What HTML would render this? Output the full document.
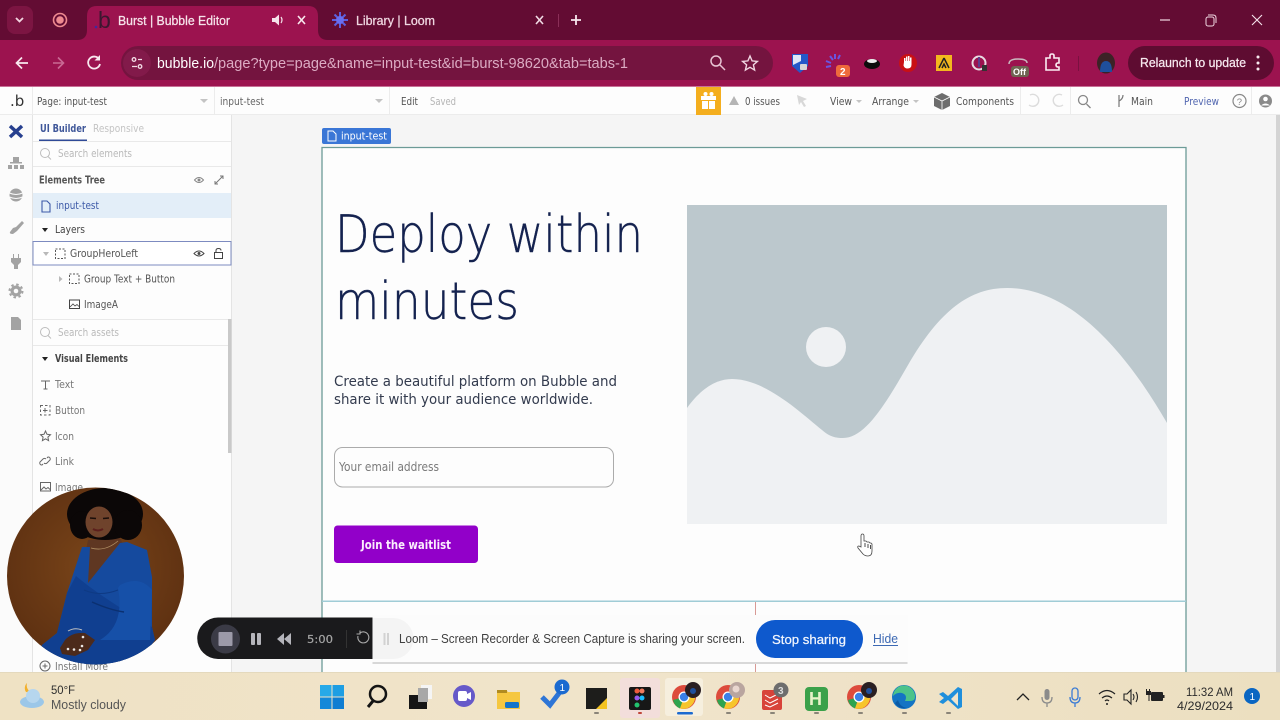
<!DOCTYPE html>
<html><head><meta charset="utf-8"><title>Burst | Bubble Editor</title>
<style>
html,body{margin:0;padding:0;width:1280px;height:720px;overflow:hidden;background:#f6f6f6}
svg{display:block;position:absolute;left:0;top:0}
text{white-space:pre}
.s{font-family:"Liberation Sans",sans-serif}
.o{font-family:"DejaVu Sans",sans-serif}
</style></head><body>
<svg width="1280" height="720" viewBox="0 0 1280 720" xmlns="http://www.w3.org/2000/svg">
<defs>
<clipPath id="cam"><circle cx="95.5" cy="576" r="88.5"/></clipPath>
<linearGradient id="tb" x1="0" x2="1" y1="0" y2="0"><stop offset="0" stop-color="#efe2c4"/><stop offset=".5" stop-color="#f0e4cb"/><stop offset="1" stop-color="#ecdfc0"/></linearGradient>
<radialGradient id="br" cx=".5" cy=".45" r=".6"><stop offset="0" stop-color="#7a4519"/><stop offset="1" stop-color="#5c2f11"/></radialGradient>
</defs>

<!-- Browser chrome -->
<rect width="1280" height="40" fill="#630c33"/>
<rect x="7" y="6" width="26" height="28" rx="8" fill="#7c1542"/>
<path d="M16 18l3.500 3.500L23 18" fill="none" stroke="#f2d5e0" stroke-width="1.800"/>
<circle cx="60" cy="20" r="6.500" fill="none" stroke="#ee8a90" stroke-width="1.600"/><circle cx="60" cy="20" r="3.800" fill="#ee8a90"/>
<path d="M77 40q10 0 10-10V16q0-10 10-10h211q10 0 10 10v14q0 10 10 10z" fill="#9c134f"/>
<circle cx="96" cy="27" r="1.300" fill="#3a2aa0"/>
<text class="s" x="98" y="28" font-size="23" fill="#3b1730">b</text>
<text class="s" x="118" y="25" font-size="12.500" fill="#f6e3ea" stroke="#f6e3ea" stroke-width=".25" textLength="112" lengthAdjust="spacingAndGlyphs">Burst | Bubble Editor</text>
<path d="M272 18h3l4-3.500v11L275 22h-3z" fill="#f5e3ea"/><path d="M281 17q2 3 0 6" fill="none" stroke="#f5e3ea" stroke-width="1.200"/>
<path d="M298 16l7 8M305 16l-7 8" stroke="#f8e8ee" stroke-width="1.600"/>
<g stroke="#5b5fe0" stroke-width="2"><path d="M340 12v16M332 20h16M334.500 14.500l11 11M345.500 14.500l-11 11"/></g><circle cx="340" cy="20" r="4" fill="#6a6ef0"/>
<text class="s" x="356" y="25" font-size="12.500" fill="#f0d8e2" stroke="#f0d8e2" stroke-width=".25" textLength="79" lengthAdjust="spacingAndGlyphs">Library | Loom</text>
<path d="M536 16l7 8M543 16l-7 8" stroke="#f0dbe4" stroke-width="1.600"/>
<rect x="558" y="14" width="1" height="13" fill="#8b2f58"/>
<path d="M576 15v10M571 20h10" stroke="#f8e8ee" stroke-width="1.800"/>
<path d="M1160 20h10" stroke="#f0d8e2" stroke-width="1.200"/>
<rect x="1206" y="17" width="8" height="9" rx="2" fill="none" stroke="#f0d8e2" stroke-width="1"/><path d="M1208 15h5q3 0 3 3v5" fill="none" stroke="#f0d8e2"/>
<path d="M1252 15l10 10M1262 15l-10 10" stroke="#f6e4ec" stroke-width="1.100"/>

<rect y="40" width="1280" height="47" fill="#9c134f"/>
<rect x="0" y="86" width="1280" height="1" fill="#c77096"/>
<path d="M28 63H17M22 57.500L16.500 63l5.500 5.500" fill="none" stroke="#f8e8ee" stroke-width="1.700"/>
<path d="M64 63H53M58 57.500l5.500 5.500-5.500 5.500" fill="none" stroke="#c96a94" stroke-width="1.600"/>
<path d="M99 59a6 6 0 1 0 1 5" fill="none" stroke="#f8e8ee" stroke-width="1.800"/><path d="M100 55v5.500h-5.500z" fill="#f8e8ee"/>
<rect x="121" y="46" width="652" height="34" rx="17" fill="#74143f"/>
<circle cx="137" cy="63" r="14" fill="#821a4a"/>
<g fill="none" stroke="#f3dbe5" stroke-width="1.300"><circle cx="134" cy="59.500" r="1.800"/><path d="M138 59.500h4M132 66.500h5"/><circle cx="140" cy="66.500" r="1.800"/></g>
<text class="s" x="157" y="68" font-size="14.500" fill="#fff" textLength="57" lengthAdjust="spacingAndGlyphs">bubble.io</text>
<text class="s" x="214" y="68" font-size="14.500" fill="#dcabc3" textLength="414" lengthAdjust="spacingAndGlyphs">/page?type=page&amp;name=input-test&amp;id=burst-98620&amp;tab=tabs-1</text>
<circle cx="716" cy="61" r="5" fill="none" stroke="#e7c3d3" stroke-width="1.500"/><path d="M720 65l5 5" stroke="#e7c3d3" stroke-width="1.500"/>
<path d="M750 56l2.100 4.900 5.300.5-4 3.500 1.200 5.200-4.600-2.800-4.600 2.800 1.200-5.200-4-3.500 5.300-.5z" fill="none" stroke="#f1d6e2" stroke-width="1.400"/>
<path d="M792 54h16v12l-8 7-8-7z" fill="#2458c9"/><path d="M793 55h8v6l-8 4z" fill="#dfe7f7"/><rect x="800" y="64" width="7" height="6" rx="1" fill="#d7d7d7"/>
<g stroke="#6a55e0" stroke-width="2"><path d="M830 56l3 4M835 54v5M826 61l5 2M826 67l5-1M840 55l-2 4"/></g><rect x="836" y="65" width="14" height="12" rx="3" fill="#ee6a3c"/><text class="s" x="840" y="75" font-size="10" font-weight="bold" fill="#fff">2</text>
<ellipse cx="872" cy="64" rx="8" ry="5" fill="#0c0c0c"/><ellipse cx="872" cy="61" rx="5" ry="2" fill="#eee"/>
<circle cx="908" cy="63" r="9" fill="#c91015"/><path d="M904 62v-4h1.500v3h.5v-4.500h1.500v4.500h.5v-5h1.500v5h.5v-3.500h1.500v7q0 4-4 4-3 0-4-3z" fill="#fff"/>
<rect x="936" y="55" width="16" height="16" fill="#f3b81e"/><path d="M944 58l-5 10M944 58l5 10M942 68l2-4 2 4" fill="none" stroke="#222" stroke-width="1.500"/>
<circle cx="979" cy="63" r="6.500" fill="none" stroke="#e8dce2" stroke-width="2"/><rect x="978" y="57" width="2" height="10" fill="#5f3c8a"/><rect x="982" y="65" width="5" height="6" fill="#333"/>
<path d="M1009 64q0-5 9-5t9 4" fill="none" stroke="#c9b9bf" stroke-width="1.500"/><rect x="1011" y="66" width="18" height="11" rx="3" fill="#6f6452"/><text class="s" x="1013" y="75" font-size="9" font-weight="bold" fill="#fff">Off</text>
<path d="M1046 58h4v-2.500q0-1.500 2-1.500t2 1.500V58h5v5h-1q-2 0-2 2t2 2h1v3h-13z" fill="none" stroke="#fbeef3" stroke-width="1.600"/>
<rect x="1078" y="56" width="1" height="15" fill="#7a1040"/>
<ellipse cx="1106" cy="63" rx="9" ry="10.500" fill="#3c2226"/><path d="M1100 72q0-11 6-11t6 11z" fill="#1f4f9c"/>
<rect x="1128" y="46" width="146" height="34" rx="17" fill="#5e0c31"/>
<text class="s" x="1140" y="67" font-size="13" fill="#f7e9ef" stroke="#f7e9ef" stroke-width=".25" textLength="106" lengthAdjust="spacingAndGlyphs">Relaunch to update</text>
<g fill="#f7e9ef"><circle cx="1258" cy="57" r="1.500"/><circle cx="1258" cy="63" r="1.500"/><circle cx="1258" cy="69" r="1.500"/></g>

<!-- Bubble top bar -->
<rect y="87" width="1280" height="28" fill="#fdfdfd"/>
<rect y="114" width="1280" height="1" fill="#ececec"/>
<text class="o" x="10" y="106" font-size="15" fill="#333">.b</text>
<g fill="#ececec"><rect x="32" y="87" width="1" height="28"/><rect x="214" y="87" width="1" height="28"/><rect x="389" y="87" width="1" height="28"/><rect x="1020" y="87" width="1" height="28"/><rect x="1070" y="87" width="1" height="28"/><rect x="1251" y="87" width="1" height="28"/></g>
<g class="o" font-size="11" fill="#555">
<text x="37" y="105" textLength="70" lengthAdjust="spacingAndGlyphs">Page: input-test</text>
<text x="220" y="105" textLength="44" lengthAdjust="spacingAndGlyphs" fill="#666">input-test</text>
<text x="401" y="105" textLength="17" lengthAdjust="spacingAndGlyphs">Edit</text>
<text x="430" y="105" textLength="26" lengthAdjust="spacingAndGlyphs" fill="#b5b5b5">Saved</text>
<text x="745" y="105" textLength="35" lengthAdjust="spacingAndGlyphs">0 issues</text>
<text x="830" y="105" textLength="22" lengthAdjust="spacingAndGlyphs">View</text>
<text x="872" y="105" textLength="37" lengthAdjust="spacingAndGlyphs">Arrange</text>
<text x="956" y="105" textLength="58" lengthAdjust="spacingAndGlyphs">Components</text>
<text x="1131" y="105" textLength="22" lengthAdjust="spacingAndGlyphs">Main</text>
<text x="1184" y="105" textLength="35" lengthAdjust="spacingAndGlyphs" fill="#5166b0">Preview</text>
</g>
<g fill="#c4c4c4"><path d="M200 99h8l-4 4z"/><path d="M375 99h8l-4 4z"/><path d="M856 100h6l-3 3z"/><path d="M913 100h6l-3 3z"/></g>
<rect x="696" y="87" width="25" height="28" fill="#f4ae1e"/>
<g fill="#fff"><rect x="701" y="96" width="15" height="4"/><rect x="702" y="101" width="6" height="8"/><rect x="709" y="101" width="6" height="8"/><circle cx="705.500" cy="94" r="2"/><circle cx="711.500" cy="94" r="2"/></g>
<path d="M734 96l5 9h-10z" fill="#b5b5b5"/>
<path d="M797 95l10 4-4 2 3 5-2 1-3-5-2 3z" fill="#d8d8d8"/>
<path d="M942 93l8 4v9l-8 4-8-4v-9z" fill="#6d6d6d"/><path d="M934 97l8 4 8-4M942 101v9" fill="none" stroke="#fff" stroke-width=".8"/>
<g fill="none" stroke="#dcdcdc" stroke-width="1.400"><path d="M1030 95a6 6 0 1 1-1 10"/><path d="M1062 95a6 6 0 1 0 1 10"/></g>
<circle cx="1083" cy="100" r="4.500" fill="none" stroke="#888" stroke-width="1.300"/><path d="M1086.500 104l4 4" stroke="#888" stroke-width="1.300"/>
<path d="M1119 95v12M1123 95q0 4-4 6" fill="none" stroke="#777" stroke-width="1.200"/>
<circle cx="1239.500" cy="101" r="6.500" fill="none" stroke="#888" stroke-width="1.200"/><text class="s" x="1236.800" y="105" font-size="9.500" fill="#888">?</text>
<circle cx="1265.500" cy="101" r="6.500" fill="#8a8a8a"/><circle cx="1265.500" cy="99" r="2.300" fill="#fff"/><path d="M1261 105.500q4.500-4 9 0z" fill="#fff"/>

<!-- Canvas background -->
<rect x="232" y="115" width="1048" height="557" fill="#f5f5f5"/>
<rect x="1276" y="115" width="4" height="557" fill="#d4d4d4"/>
<rect x="322" y="147" width="864" height="525" fill="#fdfdfd"/>
<path d="M322 672V147.500H1186V672" fill="none" stroke="#6c9b97" stroke-width="1.300"/>
<rect x="322" y="600.500" width="864" height="1.500" fill="#a0ccd6"/>
<rect x="755" y="602" width="1" height="70" fill="#d89a95"/>
<rect x="322" y="128" width="69" height="16" rx="2" fill="#3a76d6"/>
<path d="M328 131h5l3 3v7h-8z" fill="none" stroke="#fff" stroke-width="1"/>
<text class="o" x="341" y="139.500" font-size="10.500" fill="#fff" textLength="46" lengthAdjust="spacingAndGlyphs">input-test</text>

<text x="335" y="252" font-size="52" font-weight="200" fill="#14224f" stroke="#14224f" stroke-width=".4" textLength="308" lengthAdjust="spacingAndGlyphs" style="font-family:'DejaVu Sans ExtraLight','DejaVu Sans',sans-serif">Deploy within</text>
<text x="335" y="319" font-size="52" font-weight="200" fill="#14224f" stroke="#14224f" stroke-width=".4" textLength="184" lengthAdjust="spacingAndGlyphs" style="font-family:'DejaVu Sans ExtraLight','DejaVu Sans',sans-serif">minutes</text>
<text class="o" x="334" y="386" font-size="14" fill="#333b4e" textLength="283" lengthAdjust="spacingAndGlyphs">Create a beautiful platform on Bubble and</text>
<text class="o" x="334" y="404" font-size="14" fill="#333b4e" textLength="259" lengthAdjust="spacingAndGlyphs">share it with your audience worldwide.</text>
<rect x="334.500" y="447.500" width="279" height="39.500" rx="8" fill="#fdfdfd" stroke="#ababab"/>
<text class="o" x="339" y="471" font-size="12" fill="#7a7a7a" textLength="100" lengthAdjust="spacingAndGlyphs">Your email address</text>
<rect x="334" y="525.500" width="144" height="37.500" rx="3.500" fill="#9200c9"/>
<text class="o" x="361" y="549" font-size="12.500" font-weight="bold" fill="#fbeefd" textLength="90" lengthAdjust="spacingAndGlyphs">Join the waitlist</text>

<rect x="687" y="205" width="480" height="319" fill="#bcc8cd"/>
<circle cx="826" cy="347" r="20" fill="#eff1f3"/>
<path d="M687 408C700 390 715 379 732 379C765 379 800 412 822 430C830 437 836 438 843 438C865 438 885 405 908 365C940 310 970 288 1007 288C1070 288 1125 350 1167 423L1167 524L687 524Z" fill="#eff1f3"/>
<path d="M861 536v11l-2-1q-2 0-1 2l5 6q2 2 5 2 4 0 4-5v-7l-1-1-1 0-1-1-2 0-1-1-2 0v-5q0-2-1.500-2t-1.500 2z" fill="#fff" stroke="#444" stroke-width=".8"/>
<path d="M865 543v4M868 544v4M870.500 545v4" stroke="#222" stroke-width=".8"/>

<!-- Left rail and panel -->
<rect y="115" width="32" height="557" fill="#fbfbfb"/>
<rect x="32" y="115" width="200" height="557" fill="#fdfdfd"/>
<rect x="32" y="115" width="1" height="557" fill="#e4e4e4"/>
<rect x="231" y="115" width="1" height="557" fill="#e4e4e4"/>
<path d="M10 126l12 11M22 126l-12 11" stroke="#27408f" stroke-width="3.500"/>
<g fill="#a3a3a3">
<rect x="13" y="157" width="6" height="5"/><rect x="8" y="165" width="4" height="4"/><rect x="14" y="165" width="4" height="4"/><rect x="20" y="165" width="4" height="4"/><rect x="10" y="162" width="12" height="1.500"/>
<ellipse cx="16" cy="195" rx="6.500" ry="6.500"/>
<path d="M22 221l2 2-7 8-4 3q-4 0-3-2l3-4 3-1z"/>
<path d="M13 254h1v4h4v-4h1v4h2v4l-3 3v4h-4v-4l-3-3v-4h2z"/>
<circle cx="16" cy="291" r="5.500"/>
<path d="M11 317h7l3 3v10H11z"/>
</g>
<circle cx="16" cy="291" r="6.500" fill="none" stroke="#a3a3a3" stroke-width="2" stroke-dasharray="2.500 2.600"/>
<circle cx="16" cy="291" r="2.300" fill="#fbfbfb"/>
<path d="M9.500 193q6.500 3 13 0M9.500 197q6.500 3 13 0" fill="none" stroke="#fbfbfb" stroke-width="1"/>

<g class="o">
<text x="40" y="132" font-size="10.500" font-weight="bold" fill="#3f5799" textLength="46" lengthAdjust="spacingAndGlyphs">UI Builder</text>
<text x="93" y="132" font-size="10.500" fill="#c4c4c4" textLength="51" lengthAdjust="spacingAndGlyphs">Responsive</text>
<text x="58" y="157" font-size="10.500" fill="#b9b9b9" textLength="74" lengthAdjust="spacingAndGlyphs">Search elements</text>
<text x="39" y="183.500" font-size="10.500" font-weight="bold" fill="#555" textLength="66" lengthAdjust="spacingAndGlyphs">Elements Tree</text>
</g>
<rect x="39" y="139.500" width="48" height="1.500" fill="#2f4a97"/>
<g fill="#e9e9e9"><rect x="33" y="141" width="198" height="1"/><rect x="33" y="166" width="198" height="1"/><rect x="33" y="319" width="198" height="1"/><rect x="33" y="345" width="198" height="1"/></g>
<g fill="none" stroke="#bdbdbd" stroke-width="1"><circle cx="45" cy="153" r="4.500"/><path d="M48 156.500l3 3"/><circle cx="45" cy="332" r="4.500"/><path d="M48 335.500l3 3"/></g>
<path d="M194.500 180q4.500-5 9 0q-4.500 5-9 0z" fill="none" stroke="#888"/><circle cx="199" cy="180" r="1.500" fill="#888"/>
<path d="M215 184l8-8M220 176h3v3M215 181v3h3" fill="none" stroke="#777" stroke-width="1"/>
<rect x="33" y="193" width="198" height="25" fill="#e3eef8"/>
<path d="M42 201h5l3 3v8h-8z" fill="none" stroke="#3d5aa8" stroke-width="1.100"/>
<text class="o" x="56" y="209" font-size="10.500" fill="#3d5aa8" textLength="43" lengthAdjust="spacingAndGlyphs">input-test</text>
<path d="M42 228h6l-3 4z" fill="#222"/>
<text class="o" x="55" y="233" font-size="10.500" fill="#444" textLength="30" lengthAdjust="spacingAndGlyphs">Layers</text>
<rect x="33" y="241.500" width="198" height="23.500" fill="#fff" stroke="#7d8bc0"/>
<path d="M43 252h6l-3 4z" fill="#b9b9b9"/>
<rect x="55.500" y="249" width="9.500" height="9.500" fill="none" stroke="#555" stroke-dasharray="2 1.500"/>
<text class="o" x="70" y="257" font-size="10.500" fill="#555" textLength="68" lengthAdjust="spacingAndGlyphs">GroupHeroLeft</text>
<path d="M194 253.500q5-5 10 0q-5 5-10 0z" fill="none" stroke="#444"/><circle cx="199" cy="253.500" r="1.500" fill="#444"/>
<rect x="214.500" y="252.500" width="8" height="6" fill="none" stroke="#444"/><path d="M216 252.500v-2q0-2 2.500-2t2.500 2" fill="none" stroke="#444"/>
<path d="M59 276v6l3.500-3z" fill="#b9b9b9"/>
<rect x="69.500" y="274" width="9.500" height="9.500" fill="none" stroke="#555" stroke-dasharray="2 1.500"/>
<text class="o" x="84" y="282.500" font-size="10.500" fill="#555" textLength="91" lengthAdjust="spacingAndGlyphs">Group Text + Button</text>
<rect x="69.500" y="300" width="10" height="8.500" fill="none" stroke="#444"/><path d="M70 307l3-3 2 2 2-1.500 2 2" fill="none" stroke="#444" stroke-width=".8"/>
<text class="o" x="84" y="308" font-size="10.500" fill="#555" textLength="34" lengthAdjust="spacingAndGlyphs">ImageA</text>
<rect x="228" y="319" width="3.500" height="134" fill="#c9c9c9"/>
<text class="o" x="58" y="336" font-size="10.500" fill="#b9b9b9" textLength="61" lengthAdjust="spacingAndGlyphs">Search assets</text>
<path d="M42 357h6l-3 4z" fill="#222"/>
<g class="o" font-size="10.500" fill="#777">
<text x="55" y="362" font-weight="bold" fill="#444" textLength="73" lengthAdjust="spacingAndGlyphs">Visual Elements</text>
<text x="55" y="388" textLength="19" lengthAdjust="spacingAndGlyphs">Text</text>
<text x="55" y="414" textLength="30" lengthAdjust="spacingAndGlyphs">Button</text>
<text x="55" y="440" textLength="19" lengthAdjust="spacingAndGlyphs">Icon</text>
<text x="55" y="465" textLength="19" lengthAdjust="spacingAndGlyphs">Link</text>
<text x="55" y="491" textLength="28" lengthAdjust="spacingAndGlyphs">Image</text>
<text x="55" y="670" textLength="53" lengthAdjust="spacingAndGlyphs">Install More</text>
</g>
<g fill="none" stroke="#666" stroke-width="1">
<path d="M41 381h9M45.500 381v8M43.500 389h4"/>
<rect x="40.500" y="405.500" width="9.500" height="9.500" stroke-dasharray="2.500 2"/><path d="M45 408v4.500M43 410.500h4.500"/>
<path d="M45.500 431l1.500 3.300 3.500.4-2.600 2.400.7 3.500-3.100-1.800-3.100 1.800.7-3.500-2.600-2.400 3.500-.4z"/>
<path d="M43 464l-1 1a2 2 0 0 1-2-3l3-3a2 2 0 0 1 3 0M47 458l1-1a2 2 0 0 1 2 3l-3 3a2 2 0 0 1-3 0"/>
<rect x="40.500" y="482.500" width="10" height="8.500"/><path d="M41 490l3-3 2 2 2-1.500 2 2"/>
<circle cx="45" cy="666" r="5"/><path d="M45 663.500v5M42.500 666h5"/>
</g>

<!-- Webcam -->
<circle cx="95.500" cy="576" r="88.500" fill="url(#br)"/>
<g clip-path="url(#cam)">
<path d="M88 540L120 538L124 546L90 590L84 560z" fill="#5f3722"/>
<path d="M82 547L90 547L88 583L120 543L127 542L147 550L152 577L152 627L155 640L140 660L100 672L35 672L42 645L57 633L67 593Z" fill="#154a9e"/>
<path d="M67 593L76 576Q95 592 124 610L152 627L155 640L140 660L100 672L35 672L42 645L57 633Z" fill="#103f90"/>
<path d="M118 588Q125 625 100 640L150 640L152 590Q140 575 120 585z" fill="#1650a8"/>
<path d="M92 602Q110 610 124 612" fill="none" stroke="#0b3070" stroke-width="1.500"/>
<path d="M84 590Q100 597 118 590" fill="none" stroke="#0e3a84" stroke-width="1"/>
<ellipse cx="105" cy="514" rx="38" ry="26" fill="#0b0707"/>
<ellipse cx="82" cy="525" rx="12" ry="14" fill="#0b0707"/><ellipse cx="128" cy="525" rx="14" ry="15" fill="#0b0707"/>
<ellipse cx="99" cy="522" rx="13.500" ry="15.500" fill="#6f432c"/>
<path d="M90 518l6 .5M103 518.500l6-.5" stroke="#1a0e0a" stroke-width="1.500"/><path d="M93 529q5 3 10 0" stroke="#5c1f1c" stroke-width="2" fill="none"/>
<path d="M91 548Q105 552 118 541" fill="none" stroke="#b08f64" stroke-width=".8"/>
<path d="M65 640Q72 632 85 633L95 640L88 650L75 656L62 654L60 648z" fill="#4c2a1b"/>
<path d="M68 631Q75 627 82 630" fill="none" stroke="#c0c0c0" stroke-width="1"/>
<g fill="#ece7e4"><circle cx="68" cy="649" r="1.300"/><circle cx="74" cy="649.500" r="1.300"/><circle cx="80" cy="650" r="1.300"/><circle cx="83" cy="637" r="1.300"/><circle cx="82" cy="646" r="1.300"/></g>
</g>

<!-- Loom controls and share bar -->
<path d="M218 617.500H400v41.500H218a20.700 20.700 0 0 1 0-41.500z" fill="#1a1a1c"/>
<circle cx="225.500" cy="639" r="14.500" fill="#3b3b46"/>
<rect x="218.500" y="632" width="14" height="14" rx="1" fill="#9c9aa9"/>
<g fill="#b5b5bb"><rect x="251" y="633" width="4" height="12" rx="1"/><rect x="257" y="633" width="4" height="12" rx="1"/><path d="M284 633v12l-7-6zM291 633v12l-7-6z"/></g>
<text class="o" x="307" y="643" font-size="10.500" fill="#a5a5a5" stroke="#a5a5a5" stroke-width=".2" textLength="26" lengthAdjust="spacingAndGlyphs">5:00</text>
<rect x="346" y="630" width="1" height="18" fill="#333"/>
<path d="M360 633a5.500 5.500 0 1 1-2 3M360 630.500v3.500h-3.500" fill="none" stroke="#aaa" stroke-width="1.100"/>
<rect x="372.500" y="615" width="535" height="48" fill="#fcfcfc"/>
<rect x="372.500" y="662" width="535" height="2" fill="#d8d8d8"/>
<path d="M373 618h20a20.500 20.500 0 0 1 0 41h-20z" fill="#f4f4f4"/>
<g fill="#d2d2d2"><rect x="383.500" y="633" width="2" height="12"/><rect x="387" y="633" width="2" height="12"/></g>
<text class="s" x="399" y="643" font-size="12.500" fill="#3f3f3f" textLength="346" lengthAdjust="spacingAndGlyphs">Loom – Screen Recorder &amp; Screen Capture is sharing your screen.</text>
<rect x="756" y="620" width="107" height="38" rx="19" fill="#0e59cd"/>
<text class="s" x="772" y="644" font-size="13" fill="#f2f6fd" stroke="#f2f6fd" stroke-width=".25" textLength="74" lengthAdjust="spacingAndGlyphs">Stop sharing</text>
<text class="s" x="873" y="643" font-size="12.500" fill="#3d69b3" textLength="25" lengthAdjust="spacingAndGlyphs">Hide</text>
<rect x="873" y="645" width="25" height="1" fill="#3d69b3"/>

<!-- Taskbar -->
<rect y="672" width="1280" height="48" fill="url(#tb)"/>
<rect y="672" width="1280" height="1" fill="#e4d9bd"/>
<path d="M26 692a7 7 0 0 1 1-9 8 8 0 0 0 6 10z" fill="#f2b02c"/>
<ellipse cx="32" cy="702" rx="12" ry="6" fill="#9cc7e8"/><circle cx="33" cy="696" r="7" fill="#b6d6ee"/>
<text class="s" x="51" y="694" font-size="12" fill="#2f2f2f" textLength="24" lengthAdjust="spacingAndGlyphs">50°F</text>
<text class="s" x="51" y="709" font-size="12.500" fill="#555" textLength="75" lengthAdjust="spacingAndGlyphs">Mostly cloudy</text>
<g><rect x="320" y="685" width="11.500" height="11.500" fill="#27a9e8"/><rect x="332.500" y="685" width="11.500" height="11.500" fill="#1e9ee3"/><rect x="320" y="697.500" width="11.500" height="11.500" fill="#1488d9"/><rect x="332.500" y="697.500" width="11.500" height="11.500" fill="#0f7dd2"/></g>
<circle cx="378" cy="694" r="8" fill="none" stroke="#141414" stroke-width="2.500"/><path d="M373 701l-5 6" stroke="#141414" stroke-width="3"/>
<rect x="421" y="685" width="11" height="14" fill="#f5f5f5"/><rect x="409" y="695" width="18" height="14" fill="#151515"/><rect x="418" y="688" width="10" height="14" fill="#a8a8a8"/>
<circle cx="464" cy="696" r="11" fill="#6659c9"/><rect x="458" y="691" width="9" height="10" rx="2" fill="#fff"/><path d="M467 694l4-2v8l-4-2z" fill="#fff"/>
<path d="M497 690h9l2 2h12v17h-23z" fill="#f5c740"/><rect x="497" y="690" width="10" height="3" fill="#b08b20"/><rect x="505" y="702" width="14" height="6" rx="1.500" fill="#1274c9"/>
<path d="M542 697l8 8 13-17" fill="none" stroke="#2e75d6" stroke-width="5"/><circle cx="562" cy="687" r="7.500" fill="#1b6ad0"/><text class="s" x="559.500" y="691" font-size="10" fill="#fff">1</text>
<rect x="586" y="688" width="21" height="21" fill="#1d1d1b"/><path d="M596 709l11-11v11z" fill="#f4c320"/>
<rect x="620" y="678" width="40" height="40" rx="3" fill="#f3dedb"/>
<rect x="629" y="687" width="22" height="23" rx="2" fill="#171717"/><g><circle cx="637" cy="691" r="2.500" fill="#ee5b3e"/><circle cx="642" cy="691" r="2.500" fill="#f07a5e"/><circle cx="637" cy="698" r="2.500" fill="#9a5af0"/><circle cx="642" cy="698" r="2.500" fill="#1abcfe"/><circle cx="637" cy="705" r="2.500" fill="#22c26e"/></g>
<rect x="665" y="678" width="38" height="38" rx="3" fill="#f6efde"/>
<rect x="677" y="712" width="16" height="2.500" rx="1.250" fill="#1b6ad0"/>
<circle cx="684" cy="697" r="12" fill="#dd4b3c"/><path d="M684 697l-11 3a12 12 0 0 0 7 8.500z" fill="#2ea44f"/><path d="M684 697l-4 11.500a12 12 0 0 0 15-13z" fill="#f7c52c"/><circle cx="684" cy="697" r="5.500" fill="#fff"/><circle cx="684" cy="697" r="4.200" fill="#3a80e8"/>
<circle cx="693" cy="690" r="8" fill="#2a1f22"/><circle cx="693" cy="691" r="3" fill="#1f4f9c"/>
<circle cx="728" cy="697" r="12" fill="#dd4b3c"/><path d="M728 697l-11 3a12 12 0 0 0 7 8.500z" fill="#2ea44f"/><path d="M728 697l-4 11.500a12 12 0 0 0 15-13z" fill="#f7c52c"/><circle cx="728" cy="697" r="5.500" fill="#fff"/><circle cx="728" cy="697" r="4.200" fill="#3a80e8"/>
<circle cx="737" cy="690" r="8" fill="#b9a59f"/><circle cx="736" cy="689" r="3.500" fill="#e9d6cf"/>
<rect x="762" y="690" width="20" height="20" rx="2" fill="#d8433a"/><path d="M765 695l5 3 8-4M765 700l5 3 8-4M765 705l5 2 8-4" fill="none" stroke="#fff" stroke-width="1"/>
<circle cx="781" cy="690" r="7.500" fill="#6d6d6d"/><text class="s" x="778" y="694" font-size="10" font-weight="bold" fill="#ddd">3</text>
<rect x="805" y="687" width="23" height="24" rx="4" fill="#3ba14a"/><text class="s" x="809" y="705" font-size="18" font-weight="bold" fill="#e6f3c8">H</text>
<circle cx="859" cy="697" r="12" fill="#dd4b3c"/><path d="M859 697l-11 3a12 12 0 0 0 7 8.500z" fill="#2ea44f"/><path d="M859 697l-4 11.500a12 12 0 0 0 15-13z" fill="#f7c52c"/><circle cx="859" cy="697" r="5.500" fill="#fff"/><circle cx="859" cy="697" r="4.200" fill="#3a80e8"/>
<circle cx="869" cy="690" r="8" fill="#2a1f22"/><circle cx="869" cy="691" r="3" fill="#1f4f9c"/>
<circle cx="904" cy="697" r="12" fill="#1474c4"/><path d="M893 696a11 11 0 0 1 22 1q0 4-5 4h-5q3-6-3-8-5-1-9 3z" fill="#4cc38a"/><path d="M898 700q2 7 9 8-9 1-12-5z" fill="#0b5aa5"/>
<path d="M939 694l4-2 5 4 10-9 4 2v18l-4 2-10-9-5 4-4-2 5-4z" fill="#1f8fdc"/><path d="M958 692v14l-7-7z" fill="#f0e4cb"/>
<g fill="#8a8478"><rect x="594" y="712" width="5" height="2" rx="1"/><rect x="726" y="712" width="5" height="2" rx="1"/><rect x="770" y="712" width="5" height="2" rx="1"/><rect x="814" y="712" width="5" height="2" rx="1"/><rect x="858" y="712" width="5" height="2" rx="1"/><rect x="902" y="712" width="5" height="2" rx="1"/><rect x="946" y="712" width="5" height="2" rx="1"/></g>
<rect x="638" y="712" width="4" height="2" rx="1" fill="#c0453a"/>
<path d="M1017 700l6-6 6 6" fill="none" stroke="#222" stroke-width="1.300"/>
<rect x="1044.500" y="689" width="5" height="11" rx="2.500" fill="#8b8b8b"/><path d="M1042 697q0 6 5 6t5-6M1047 703v4" fill="none" stroke="#8b8b8b" stroke-width="1.300"/>
<rect x="1072" y="688" width="6" height="12" rx="3" fill="none" stroke="#3a7bd5" stroke-width="1.300"/><path d="M1070 697q0 6 5 6t5-6M1075 703v4" fill="none" stroke="#3a7bd5" stroke-width="1.300"/>
<path d="M1099 694q8-7 16 0M1102 698q5-4 10 0M1105 701q2-2 4 0" fill="none" stroke="#222" stroke-width="1.200"/><circle cx="1107" cy="704" r="1" fill="#222"/>
<path d="M1124 694h3l4-4v14l-4-4h-3z" fill="none" stroke="#222" stroke-width="1.100"/><path d="M1133 694q2 3 0 6M1136 692q3 5 0 10" fill="none" stroke="#222" stroke-width="1.100"/>
<rect x="1151" y="692" width="12" height="9" rx="1" fill="#222"/><rect x="1163" y="695" width="1.500" height="3" fill="#222"/><path d="M1149 691v10M1146.500 691v-2M1149.500 691v-2" stroke="#222"/><rect x="1146" y="691" width="5" height="4" fill="#222"/>
<text class="s" x="1186" y="696" font-size="12" fill="#2c2c2c" textLength="47" lengthAdjust="spacingAndGlyphs">11:32 AM</text>
<text class="s" x="1177" y="710" font-size="12" fill="#2c2c2c" textLength="56" lengthAdjust="spacingAndGlyphs">4/29/2024</text>
<circle cx="1252" cy="696" r="8" fill="#0a66c2"/><text class="s" x="1249.500" y="700" font-size="10" fill="#fff">1</text>
</svg>
</body></html>
